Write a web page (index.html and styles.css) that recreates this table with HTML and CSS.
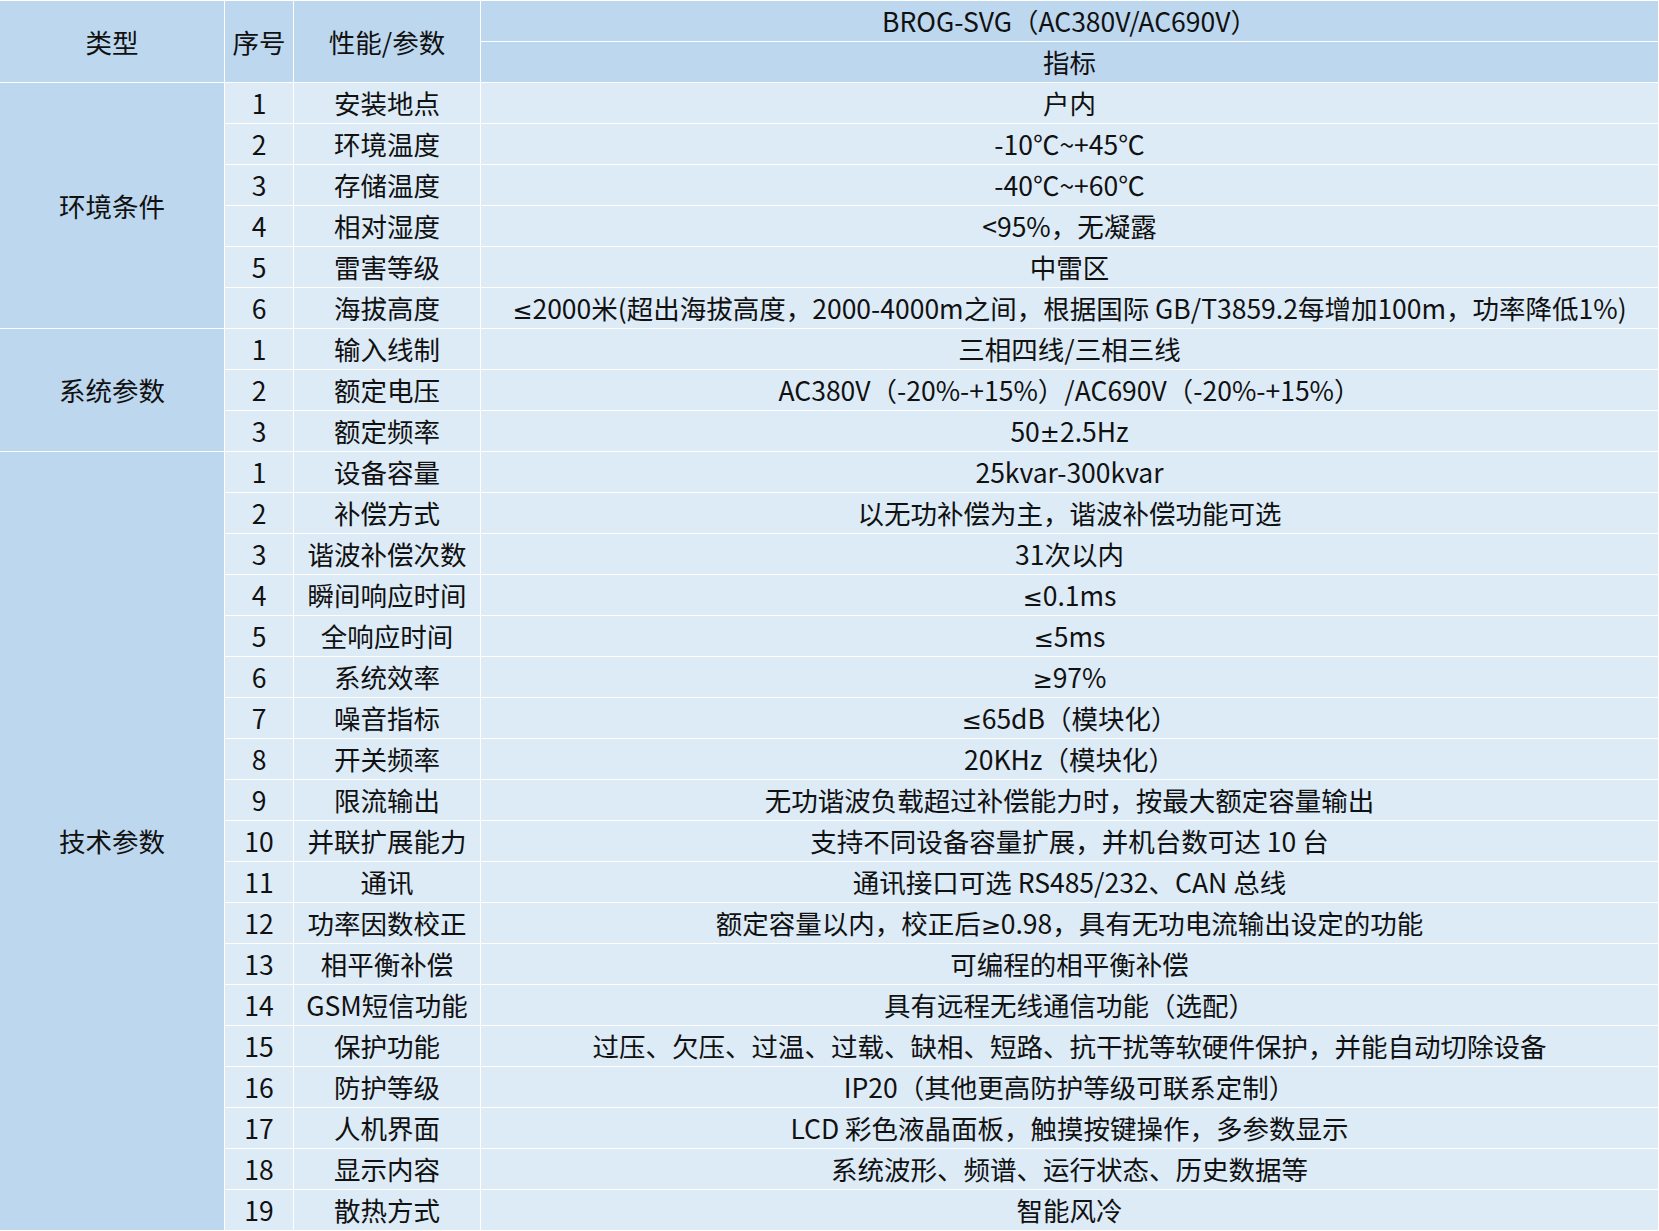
FILE: index.html
```html
<!DOCTYPE html>
<html lang="zh-CN">
<head>
<meta charset="utf-8">
<title>BROG-SVG 参数表</title>
<link rel="stylesheet" href="styles.css">
</head>
<body>
<table class="spec">
  <colgroup>
    <col class="c-type">
    <col class="c-no">
    <col class="c-name">
    <col class="c-val">
  </colgroup>
  <thead>
    <tr>
      <th rowspan="2">类型</th>
      <th rowspan="2">序号</th>
      <th rowspan="2">性能/参数</th>
      <th>BROG-SVG（AC380V/AC690V）</th>
    </tr>
    <tr>
      <th>指标</th>
    </tr>
  </thead>
  <tbody>
    <tr><td class="type" rowspan="6">环境条件</td><td>1</td><td>安装地点</td><td>户内</td></tr>
    <tr><td>2</td><td>环境温度</td><td>-10℃~+45℃</td></tr>
    <tr><td>3</td><td>存储温度</td><td>-40℃~+60℃</td></tr>
    <tr><td>4</td><td>相对湿度</td><td>&lt;95%，无凝露</td></tr>
    <tr><td>5</td><td>雷害等级</td><td>中雷区</td></tr>
    <tr><td>6</td><td>海拔高度</td><td><span class="sym">≤</span>2000米(超出海拔高度，2000-4000m之间，根据国际 GB/T3859.2每增加100m，功率降低1%)</td></tr>
    <tr><td class="type" rowspan="3">系统参数</td><td>1</td><td>输入线制</td><td>三相四线/三相三线</td></tr>
    <tr><td>2</td><td>额定电压</td><td>AC380V（-20%-+15%）/AC690V（-20%-+15%）</td></tr>
    <tr><td>3</td><td>额定频率</td><td>50<span class="sym">±</span>2.5Hz</td></tr>
    <tr><td class="type" rowspan="19">技术参数</td><td>1</td><td>设备容量</td><td>25kvar-300kvar</td></tr>
    <tr><td>2</td><td>补偿方式</td><td>以无功补偿为主，谐波补偿功能可选</td></tr>
    <tr><td>3</td><td>谐波补偿次数</td><td>31次以内</td></tr>
    <tr><td>4</td><td>瞬间响应时间</td><td><span class="sym">≤</span>0.1ms</td></tr>
    <tr><td>5</td><td>全响应时间</td><td><span class="sym">≤</span>5ms</td></tr>
    <tr><td>6</td><td>系统效率</td><td><span class="sym">≥</span>97%</td></tr>
    <tr><td>7</td><td>噪音指标</td><td><span class="sym">≤</span>65dB（模块化）</td></tr>
    <tr><td>8</td><td>开关频率</td><td>20KHz（模块化）</td></tr>
    <tr><td>9</td><td>限流输出</td><td>无功谐波负载超过补偿能力时，按最大额定容量输出</td></tr>
    <tr><td>10</td><td>并联扩展能力</td><td>支持不同设备容量扩展，并机台数可达 10 台</td></tr>
    <tr><td>11</td><td>通讯</td><td>通讯接口可选 RS485/232、CAN 总线</td></tr>
    <tr><td>12</td><td>功率因数校正</td><td>额定容量以内，校正后<span class="sym">≥</span>0.98，具有无功电流输出设定的功能</td></tr>
    <tr><td>13</td><td>相平衡补偿</td><td>可编程的相平衡补偿</td></tr>
    <tr><td>14</td><td>GSM短信功能</td><td>具有远程无线通信功能（选配）</td></tr>
    <tr><td>15</td><td>保护功能</td><td>过压、欠压、过温、过载、缺相、短路、抗干扰等软硬件保护，并能自动切除设备</td></tr>
    <tr><td>16</td><td>防护等级</td><td>IP20（其他更高防护等级可联系定制）</td></tr>
    <tr><td>17</td><td>人机界面</td><td>LCD 彩色液晶面板，触摸按键操作，多参数显示</td></tr>
    <tr><td>18</td><td>显示内容</td><td>系统波形、频谱、运行状态、历史数据等</td></tr>
    <tr><td>19</td><td>散热方式</td><td>智能风冷</td></tr>
  </tbody>
</table>
</body>
</html>
```

FILE: styles.css
```css
html, body {
  margin: 0;
  padding: 0;
  background: #ffffff;
}

.spec {
  margin-left: -1px;
  border-collapse: separate;
  border-spacing: 1px;
  table-layout: fixed;
  width: 1660px;
  background: #ffffff;
  font-family: "Noto Sans CJK SC", "Noto Sans", sans-serif;
  font-size: 26.5px;
  color: #111111;
}

.c-type { width: 224px; }
.c-no { width: 68px; }
.c-name { width: 186px; }
.c-val { width: 1177px; }

.spec th,
.spec td {
  height: 40px;
  max-height: 40px;
  padding: 0;
  text-align: center;
  vertical-align: middle;
  font-weight: normal;
  white-space: nowrap;
  line-height: 40px;
  background: #ddebf7;
}

.spec th,
.spec td.type {
  background: #bdd7ee;
}

.sym {
  font-family: "DejaVu Sans", sans-serif;
  font-size: 24px;
  line-height: 1;
}
```
